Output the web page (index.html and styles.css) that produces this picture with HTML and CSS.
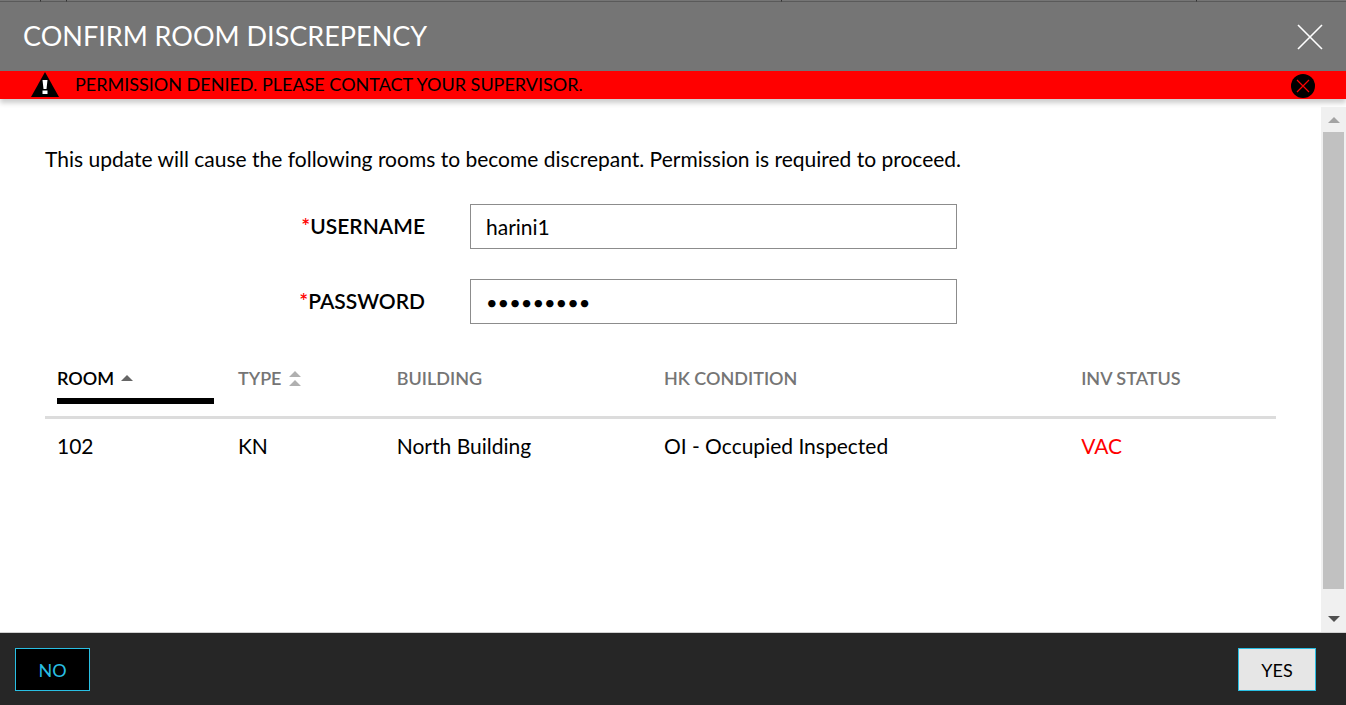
FILE: index.html
```html
<!DOCTYPE html>
<html lang="en">
<head>
    <meta charset="UTF-8">
    <meta name="viewport" content="width=device-width, initial-scale=1.0">
    <title>Confirm Room Discrepency</title>
    <link rel="stylesheet" href="styles.css">
</head>
<body>
    <!-- edge of the grid behind the dialog -->
    <div class="grid-edge" aria-hidden="true">
        <span></span><span></span><span></span><span></span><span></span>
    </div>

    <form class="dialog">
        <header class="dialog-header">
            <h1>CONFIRM ROOM DISCREPENCY</h1>
            <button type="button" class="icon-button" aria-label="Close">
                <svg width="26" height="26" viewBox="0 0 26 26"><path d="M1 1L25 25M25 1L1 25" stroke="#fff" stroke-width="1.6"/></svg>
            </button>
        </header>

        <div class="alert" role="alert">
            <svg class="warning" width="28" height="25" viewBox="0 0 28 25">
                <path d="M14 0L28 25H0Z" fill="#000"/>
                <path d="M11.5 8H16.5L15.5 17H12.5ZM11.5 18.5H16.5V22H11.5Z" fill="#fff"/>
            </svg>
            <p>PERMISSION DENIED. PLEASE CONTACT YOUR SUPERVISOR.</p>
            <button type="button" class="icon-button" aria-label="Dismiss message">
                <svg width="24" height="24" viewBox="0 0 24 24">
                    <circle cx="12" cy="12" r="12" fill="#000"/>
                    <path d="M6 6L18 18M18 6L6 18" stroke="#f00" stroke-width="1.2"/>
                </svg>
            </button>
        </div>

        <div class="dialog-body">
            <main class="content">
                <p class="intro">This update will cause the following rooms to become discrepant. Permission is required to proceed.</p>

                <div class="fields">
                    <label for="username"><span class="required">*</span>USERNAME</label>
                    <input type="text" id="username" value="harini1">
                    <label for="password"><span class="required">*</span>PASSWORD</label>
                    <input type="password" id="password" value="password1">
                </div>

                <table class="rooms">
                    <thead>
                        <tr>
                            <th class="col-room sorted"><span class="heading">ROOM <svg width="12" height="6" viewBox="0 0 12 6"><path d="M6 0L12 6H0Z" fill="#666"/></svg></span></th>
                            <th class="col-type"><span class="heading">TYPE <svg width="12" height="15" viewBox="0 0 12 15"><path d="M6 0L12 6H0ZM6 9L12 15H0Z" fill="#b0b0b0"/></svg></span></th>
                            <th class="col-building"><span class="heading">BUILDING</span></th>
                            <th class="col-condition"><span class="heading">HK CONDITION</span></th>
                            <th><span class="heading">INV STATUS</span></th>
                        </tr>
                    </thead>
                    <tbody>
                        <tr>
                            <td>102</td>
                            <td>KN</td>
                            <td>North Building</td>
                            <td>OI - Occupied Inspected</td>
                            <td class="vacant">VAC</td>
                        </tr>
                    </tbody>
                </table>
            </main>

            <div class="scrollbar" aria-hidden="true">
                <svg width="12" height="6" viewBox="0 0 12 6"><path d="M6 0L12 6H0Z" fill="#a3a3a3"/></svg>
                <div class="track"><div class="thumb"></div></div>
                <svg width="12" height="6" viewBox="0 0 12 6"><path d="M0 0H12L6 6Z" fill="#505050"/></svg>
            </div>
        </div>

        <footer class="dialog-footer">
            <button type="button" class="btn btn-no">NO</button>
            <button type="submit" class="btn btn-yes">YES</button>
        </footer>
    </form>
</body>
</html>
```
FILE: styles.css
```css
* {
    box-sizing: border-box;
}
body {
    display: flex;
    flex-direction: column;
    min-height: 100vh;
    margin: 0;
    font-family: Lato, sans-serif;
    font-size: 21px;
    color: #000;
}
h1, p {
    margin: 0;
}
.grid-edge {
    display: grid;
    grid-template-columns: 41fr 26fr 715fr 415fr 149fr;
    height: 2px;
    background-color: #757575;
}
.grid-edge span {
    border-right: 1px solid #333;
    border-bottom: 1px solid #5a5a5a;
}
.grid-edge span:last-child {
    border-right: none;
}
.dialog {
    display: flex;
    flex: 1;
    flex-direction: column;
    background-color: #fff;
}
.icon-button {
    display: flex;
    padding: 0;
    background: none;
    border: none;
    cursor: pointer;
}

/* Title bar */
.dialog-header {
    display: flex;
    align-items: center;
    justify-content: space-between;
    height: 69px;
    padding: 0 23px;
    background-color: #757575;
}
.dialog-header h1 {
    padding-bottom: 2px;
    font-size: 27px;
    font-weight: 400;
    color: #fff;
}

/* Error message */
.alert {
    display: flex;
    align-items: center;
    height: 28px;
    padding: 0 31px;
    background-color: #f00;
    box-shadow: 0 4px 5px rgba(0, 0, 0, 0.2);
    font-size: 18px;
}
.warning {
    margin-bottom: 2px;
}
.alert p {
    flex: 1;
    margin-left: 16px;
    padding-bottom: 2px;
}
.alert .icon-button {
    margin-top: 2px;
}

.dialog-body {
    display: flex;
    flex: 1;
    margin-top: 8px;
}
.content {
    flex: 1;
    padding: 39px 45px;
}
.intro {
    line-height: 26px;
}

/* Sign-in fields */
.fields {
    display: grid;
    grid-template-columns: 380fr 487fr 274fr;
    gap: 30px 45px;
    align-items: center;
    margin-top: 32px;
}
.fields label {
    grid-column: 1;
    padding-bottom: 2px;
    text-align: right;
    font-weight: 600;
}
.fields input {
    width: 100%;
    height: 45px;
    padding: 0 15px;
    border: 1px solid #8c8c8c;
    font-family: inherit;
    font-size: 21px;
    color: #000;
}
.fields input[type="password"] {
    font-size: 20px;
}
.required {
    color: #f00;
}

/* Room list */
.rooms {
    width: 100%;
    margin-top: 31px;
    border-collapse: collapse;
    table-layout: fixed;
}
.rooms th {
    height: 62px;
    padding: 0 12px;
    border-bottom: 3px solid #dcdcdc;
    text-align: left;
    vertical-align: top;
    font-size: 18px;
    font-weight: 600;
    color: #757575;
}
.rooms td {
    height: 56px;
    padding: 0 12px;
}
.col-room {
    width: 14.7%;
}
.col-type {
    width: 12.9%;
}
.col-building {
    width: 21.7%;
}
.col-condition {
    width: 33.9%;
}
.heading {
    display: flex;
    align-items: center;
    gap: 7px;
    height: 49px;
    padding-bottom: 3px;
}
.rooms .sorted {
    color: #000;
}
.sorted .heading {
    border-bottom: 6px solid #000;
    padding: 3px 0 0;
}
.rooms .vacant {
    color: #f00;
}

/* Scrollbar */
.scrollbar {
    display: flex;
    flex-direction: column;
    align-items: center;
    width: 25px;
    padding: 10px 2px;
    background-color: #f0f0f0;
}
.track {
    flex: 1;
    width: 100%;
    padding: 9px 0 27px;
}
.thumb {
    height: 100%;
    background-color: #c1c1c1;
}

/* Actions */
.dialog-footer {
    display: flex;
    justify-content: space-between;
    padding: 15px 30px 14px 15px;
    background-color: #262626;
    border-top: 1px solid #d0d0d0;
}
.btn {
    height: 43px;
    min-width: 75px;
    padding: 0 22px;
    border: 1px solid #29bfe3;
    font-family: inherit;
    font-size: 18px;
    cursor: pointer;
}
.btn-no {
    background-color: #000;
    color: #29bfe3;
}
.btn-yes {
    min-width: 78px;
    background-color: #e6e6e6;
    color: #000;
}
```
